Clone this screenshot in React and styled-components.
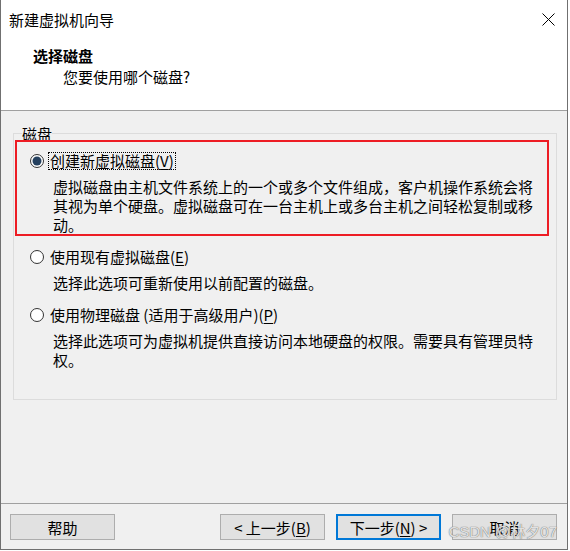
import React from 'react';
import styled, { createGlobalStyle } from 'styled-components';

const GlobalStyle = createGlobalStyle`
  html, body {
    margin: 0;
    padding: 0;
    background: #ffffff;
  }
  body {
    font-family: "Noto Sans CJK SC", "Noto Sans", sans-serif;
    font-size: 15px;
    color: #000;
  }
`;

const Window = styled.div`
  position: relative;
  width: 568px;
  height: 550px;
  box-sizing: border-box;
  border: 1px solid #707070;
  border-top: none;
  display: flex;
  flex-direction: column;
  background: #f0f0f0;
`;

const Header = styled.div`
  background: #ffffff;
  height: 110px;
  border-bottom: 1px solid #a0a0a0;
  display: flex;
  flex-direction: column;
`;

const TitleBar = styled.div`
  height: 38px;
  display: flex;
  align-items: center;
  justify-content: space-between;
  padding: 0 12px 0 8px;
`;

const TitleText = styled.span`
  line-height: 19px;
`;

const CloseButton = styled.div`
  width: 13px;
  height: 13px;
  display: flex;
  align-items: center;
  justify-content: center;
`;

const Heading = styled.div`
  margin-top: 8px;
  padding-left: 32px;
  line-height: 19px;
  font-weight: 700;
`;

const Subheading = styled.div`
  margin-top: 2px;
  padding-left: 62px;
  line-height: 19px;
`;

const Body = styled.div`
  flex: 1;
  padding: 13px 10px 0 12px;
`;

const Group = styled.fieldset`
  margin: 0;
  padding: 0 0 30px 0;
  border: 1px solid #dcdcdc;
  min-width: 0;
`;

const Legend = styled.legend`
  margin-left: 8px;
  padding: 0;
  line-height: 19px;
`;

const OptionList = styled.div`
  display: flex;
  flex-direction: column;
  gap: 13px;
  padding: 8px 0 0 16px;
`;

const Option = styled.div`
  position: relative;
`;

const OptionRow = styled.div`
  height: 19px;
  display: flex;
  align-items: center;
  gap: 4px;
`;

const OptionLabel = styled.span`
  line-height: 16px;
  padding: 0 1px;
  border: 1px ${props => (props.focused ? 'dotted #000' : 'solid transparent')};
`;

const Description = styled.div`
  margin-top: 7px;
  padding-left: 23px;
  width: 486px;
  line-height: 19px;
`;

const Highlight = styled.div`
  position: absolute;
  left: -15px;
  top: -11px;
  width: 534px;
  height: 96px;
  box-sizing: border-box;
  border: 2px solid #ed1c24;
  pointer-events: none;
`;

const Footer = styled.div`
  border-top: 1px solid #a0a0a0;
  padding: 10px 10px 9px 9px;
  display: flex;
  align-items: center;
  gap: 11px;
`;

const Spacer = styled.div`
  flex: 1;
`;

const Button = styled.div`
  width: 105px;
  height: 26px;
  box-sizing: border-box;
  background: #e1e1e1;
  border: ${props => (props.primary ? '2px solid #0078d7' : '1px solid #adadad')};
  display: flex;
  align-items: center;
  justify-content: center;
  line-height: 19px;
`;

const Mnemonic = styled.u`
  text-underline-offset: 2px;
`;

const Watermark = styled.div`
  position: absolute;
  right: 10px;
  bottom: 9px;
  font-family: "Liberation Sans", "Noto Sans CJK SC", sans-serif;
  font-size: 15px;
  line-height: 17px;
  color: rgba(240, 240, 240, 0.9);
  text-shadow: 0 0 1px #7a7a7a, 0 0 1px #7a7a7a;
  pointer-events: none;
`;

const Radio = ({ checked }) => (
  <svg width="14" height="14" viewBox="0 0 14 14">
    <circle cx="7" cy="7" r="6.5" fill="#fff" stroke="#333" strokeWidth="1" />
    {checked && <circle cx="7" cy="7" r="4.5" fill="#24405e" />}
  </svg>
);

const options = [
  {
    label: '创建新虚拟磁盘',
    key: 'V',
    text: '虚拟磁盘由主机文件系统上的一个或多个文件组成，客户机操作系统会将其视为单个硬盘。虚拟磁盘可在一台主机上或多台主机之间轻松复制或移动。',
    checked: true,
  },
  {
    label: '使用现有虚拟磁盘',
    key: 'E',
    text: '选择此选项可重新使用以前配置的磁盘。',
  },
  {
    label: '使用物理磁盘 (适用于高级用户)',
    key: 'P',
    text: '选择此选项可为虚拟机提供直接访问本地硬盘的权限。需要具有管理员特权。',
  },
];

export default function App() {
  return (
    <>
      <GlobalStyle />
      <Window>
        <Header>
          <TitleBar>
            <TitleText>新建虚拟机向导</TitleText>
            <CloseButton>
              <svg width="13" height="13" viewBox="0 0 13 13">
                <path d="M0.5 0.5 L12.5 12.5 M12.5 0.5 L0.5 12.5" stroke="#000" strokeWidth="1" />
              </svg>
            </CloseButton>
          </TitleBar>
          <Heading>选择磁盘</Heading>
          <Subheading>您要使用哪个磁盘?</Subheading>
        </Header>

        <Body>
          <Group>
            <Legend>磁盘</Legend>
            <OptionList>
              {options.map(opt => (
                <Option key={opt.key}>
                  {opt.checked && <Highlight />}
                  <OptionRow>
                    <Radio checked={opt.checked} />
                    <OptionLabel focused={opt.checked}>
                      {opt.label}(<Mnemonic>{opt.key}</Mnemonic>)
                    </OptionLabel>
                  </OptionRow>
                  <Description>{opt.text}</Description>
                </Option>
              ))}
            </OptionList>
          </Group>
        </Body>

        <Footer>
          <Button>帮助</Button>
          <Spacer />
          <Button>&lt; 上一步(<Mnemonic>B</Mnemonic>)</Button>
          <Button primary>下一步(<Mnemonic>N</Mnemonic>) &gt;</Button>
          <Button>取消</Button>
        </Footer>

        <Watermark>CSDN @林夕07</Watermark>
      </Window>
    </>
  );
}
